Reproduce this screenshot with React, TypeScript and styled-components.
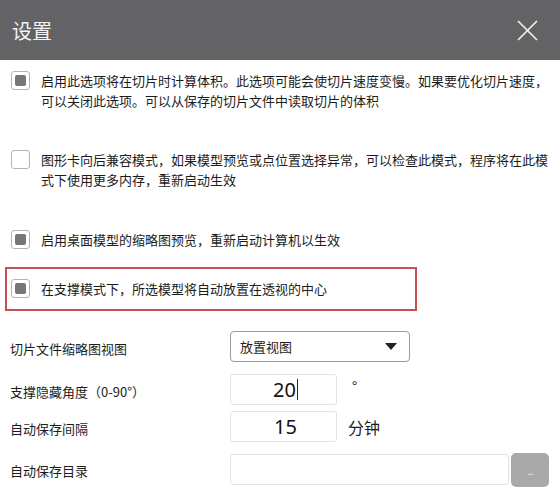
import React from "react";
import styled, { createGlobalStyle } from "styled-components";

const Global = createGlobalStyle`
  html, body { margin: 0; padding: 0; background: #ffffff; }
  body { font-family: "Noto Sans CJK SC", "Noto Sans", sans-serif; color: #1f1f1f; }
  * { box-sizing: border-box; }
`;

const Page = styled.div`
  width: 560px;
  height: 490px;
  background: #ffffff;
  overflow: hidden;
  display: flex;
  flex-direction: column;
`;

const Header = styled.div`
  height: 60px;
  flex: none;
  background: #636365;
  display: flex;
  align-items: center;
  justify-content: space-between;
  padding: 1px 22px 0 12px;
`;

const Title = styled.div`
  font-size: 20px;
  line-height: 22px;
  color: #f4f4f4;
`;

const Close = styled.div`
  width: 21px;
  height: 21px;
  display: flex;
  svg { display: block; }
`;

const Options = styled.div`
  display: flex;
  flex-direction: column;
  padding: 11px 0 0 5px;
`;

const Option = styled.div<{ $mt?: number }>`
  display: flex;
  align-items: flex-start;
  gap: 11px;
  margin-top: ${(p) => p.$mt ?? 0}px;
  padding-left: 6px;
  width: 545px;
`;

const Highlight = styled.div<{ $mt?: number }>`
  margin-top: ${(p) => p.$mt ?? 0}px;
  width: 412px;
  border: 2px solid #c4504f;
  padding: 10px 0 10px 4px;
  display: flex;
  align-items: flex-start;
  gap: 11px;
`;

const Box = styled.div<{ $checked?: boolean }>`
  flex: none;
  width: 19px;
  height: 19px;
  border: 1.5px solid #b4b4b4;
  border-radius: 3px;
  background: #fff;
  display: flex;
  align-items: center;
  justify-content: center;
  &::after {
    content: "";
    display: ${(p) => (p.$checked ? "block" : "none")};
    width: 11px;
    height: 11px;
    border-radius: 2px;
    background: #767676;
  }
`;

const OptText = styled.div`
  font-size: 13px;
  line-height: 20px;
  color: #1c1c1c;
  flex: 1;
`;

const Form = styled.div`
  display: flex;
  flex-direction: column;
  padding: 0 0 0 10px;
`;

const Row = styled.div<{ $mt: number }>`
  display: flex;
  align-items: center;
  height: 31px;
  margin-top: ${(p) => p.$mt}px;
`;

const Label = styled.div<{ $dy?: number }>`
  width: 220px;
  flex: none;
  font-size: 13px;
  line-height: 20px;
  color: #1c1c1c;
  position: relative;
  top: ${(p) => p.$dy ?? 0}px;
`;

const Select = styled.div`
  width: 180px;
  height: 31px;
  border: 1px solid #9a9a9a;
  border-radius: 4px;
  display: flex;
  align-items: center;
  justify-content: space-between;
  padding: 0 12px 0 9px;
  font-size: 13px;
  color: #1c1c1c;
`;

const Arrow = styled.div`
  width: 0;
  height: 0;
  border-left: 6px solid transparent;
  border-right: 6px solid transparent;
  border-top: 7px solid #222;
`;

const NumBox = styled.div`
  width: 107px;
  height: 31px;
  border: 1px solid #e2e2e2;
  border-radius: 3px;
  display: flex;
  align-items: center;
  justify-content: center;
  padding-left: 4px;
  font-family: "Noto Sans", "Open Sans", sans-serif;
  font-size: 20px;
  line-height: 24px;
  color: #111;
`;

const Caret = styled.span`
  display: inline-block;
  width: 1px;
  height: 21px;
  background: #2a2a2a;
  margin-left: 1px;
`;

const Unit = styled.div<{ $size: number; $dy?: number }>`
  margin-left: ${(p) => (p.$size > 14 ? 11 : 15)}px;
  font-size: ${(p) => p.$size}px;
  line-height: 20px;
  color: #1c1c1c;
  position: relative;
  top: ${(p) => p.$dy ?? 0}px;
`;

const PathBox = styled.div`
  width: 279px;
  height: 31px;
  border: 1px solid #e2e2e2;
  border-radius: 3px;
`;

const Browse = styled.div`
  width: 38px;
  height: 34px;
  margin-left: 2px;
  background: #a9a9a9;
  border-radius: 5px;
  display: flex;
  align-items: center;
  justify-content: center;
  color: #eeeeee;
  font-size: 10px;
  font-family: "Liberation Sans", sans-serif;
  padding-top: 4px;
  letter-spacing: -1px;
`;

export default function App() {
  return (
    <Page>
      <Global />
      <Header>
        <Title>设置</Title>
        <Close>
          <svg width="21" height="21" viewBox="0 0 21 21">
            <path d="M1 1 L20 20 M20 1 L1 20" stroke="#f4f4f4" strokeWidth="1.6" fill="none" />
          </svg>
        </Close>
      </Header>
      <Options>
        <Option>
          <Box $checked />
          <OptText>
            启用此选项将在切片时计算体积。此选项可能会使切片速度变慢。如果要优化切片速度，可以关闭此选项。可以从保存的切片文件中读取切片的体积
          </OptText>
        </Option>
        <Option $mt={39}>
          <Box />
          <OptText>
            图形卡向后兼容模式，如果模型预览或点位置选择异常，可以检查此模式，程序将在此模式下使用更多内存，重新启动生效
          </OptText>
        </Option>
        <Option $mt={40}>
          <Box $checked />
          <OptText>启用桌面模型的缩略图预览，重新启动计算机以生效</OptText>
        </Option>
        <Highlight $mt={17}>
          <Box $checked />
          <OptText>在支撑模式下，所选模型将自动放置在透视的中心</OptText>
        </Highlight>
      </Options>
      <Form>
        <Row $mt={20}>
          <Label $dy={2}>切片文件缩略图视图</Label>
          <Select>
            <span>放置视图</span>
            <Arrow />
          </Select>
        </Row>
        <Row $mt={12}>
          <Label $dy={2}>支撑隐藏角度（0-90°）</Label>
          <NumBox>
            20
            <Caret />
          </NumBox>
          <Unit $size={14} $dy={-4}>°</Unit>
        </Row>
        <Row $mt={6}>
          <Label $dy={2}>自动保存间隔</Label>
          <NumBox>15</NumBox>
          <Unit $size={16}>分钟</Unit>
        </Row>
        <Row $mt={12}>
          <Label $dy={1}>自动保存目录</Label>
          <PathBox />
          <Browse>...</Browse>
        </Row>
      </Form>
    </Page>
  );
}
